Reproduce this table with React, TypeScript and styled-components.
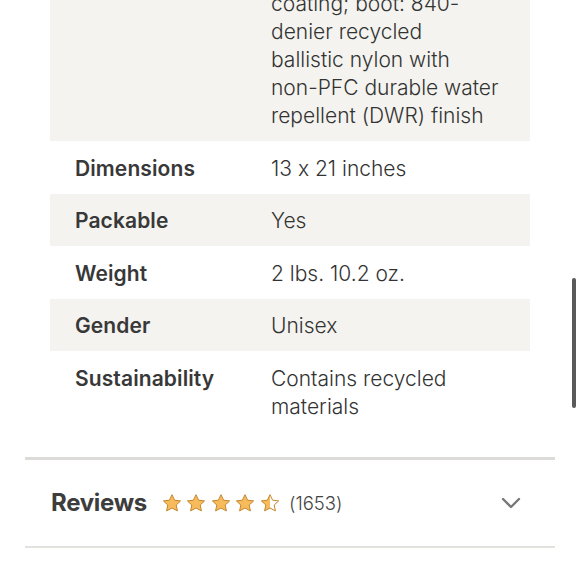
import React from "react";
import styled, { createGlobalStyle } from "styled-components";

const GlobalStyle = createGlobalStyle`
  html, body {
    margin: 0;
    padding: 0;
    background: #ffffff;
    overflow: hidden;
  }
  body {
    font-family: Inter, "Liberation Sans", sans-serif;
    font-feature-settings: "calt" 0;
    color: #333333;
    -webkit-font-smoothing: antialiased;
  }
`;

const Page = styled.div`
  width: 580px;
  height: 580px;
  overflow: hidden;
  position: relative;
`;

// the page is scrolled: the first spec row starts above the viewport
const Content = styled.div`
  margin-top: -107.5px;
  padding: 0 25px;
`;

const SpecTable = styled.div`
  margin: 0 25px;
  display: flex;
  flex-direction: column;
`;

const SpecRow = styled.div<{ $shaded?: boolean }>`
  display: grid;
  grid-template-columns: 196px 1fr;
  padding: 13.75px 16px 10.75px 25px;
  background: ${(p) => (p.$shaded ? "#f4f3ef" : "transparent")};
  font-size: 21px;
  line-height: 28px;
`;

const SpecLabel = styled.div`
  font-weight: 600;
  color: #383838;
  letter-spacing: 0.1px;
`;

const SpecValue = styled.div`
  font-weight: 300;
  color: #333333;
`;

const Section = styled.section`
  margin-top: 25px;
  border-top: 3px solid #dcdbd8;
  border-bottom: 2px solid #e2e1de;
`;

const ReviewsHeader = styled.div`
  display: flex;
  align-items: center;
  height: 86px;
  padding: 0 34px 0 26px;
`;

const ReviewsTitle = styled.h2`
  margin: 0;
  font-size: 24px;
  font-weight: 700;
  color: #3d3d3d;
  letter-spacing: -0.3px;
`;

const Stars = styled.div`
  display: flex;
  gap: 4.5px;
  margin-left: 15px;
`;

const Count = styled.span`
  margin-left: 9px;
  font-size: 18.5px;
  font-weight: 300;
  color: #444444;
`;

const Chevron = styled.svg`
  margin-left: auto;
`;

const ScrollIndicator = styled.div`
  position: absolute;
  right: 4px;
  top: 278px;
  width: 4px;
  height: 130px;
  border-radius: 2px;
  background: #5a5a5a;
`;

const STAR_PATH =
  "M10 1.2l2.6 5.5 6 .7-4.4 4.1 1.2 5.9L10 14.5l-5.4 2.9 1.2-5.9L1.4 7.4l6-.7z";

const Star: React.FC<{ fill: number; id: string }> = ({ fill, id }) => (
  <svg width="20" height="20" viewBox="0 0 20 19">
    <defs>
      <linearGradient id={id} x1="0" x2="1" y1="0" y2="0">
        <stop offset={fill} stopColor="#f7bb5c" />
        <stop offset={fill} stopColor="#ffffff" />
      </linearGradient>
    </defs>
    <path
      d={STAR_PATH}
      fill={`url(#${id})`}
      stroke="#c4862c"
      strokeWidth="1"
      strokeLinejoin="round"
    />
  </svg>
);

const specs = [
  {
    label: "Materials",
    value: [
      "Body: 900-denier",
      "recycled polyester",
      "ripstop with TPU",
      "coating; boot: 840-",
      "denier recycled",
      "ballistic nylon with",
      "non-PFC durable water",
      "repellent (DWR) finish",
    ],
  },
  { label: "Dimensions", value: ["13 x 21 inches"] },
  { label: "Packable", value: ["Yes"] },
  { label: "Weight", value: ["2 lbs. 10.2 oz."] },
  { label: "Gender", value: ["Unisex"] },
  { label: "Sustainability", value: ["Contains recycled", "materials"] },
];

const rating = [1, 1, 1, 1, 0.5];

const App: React.FC = () => {
  return (
    <Page>
      <GlobalStyle />
      <Content>
        <SpecTable>
          {specs.map((s, i) => (
            <SpecRow key={s.label} $shaded={i % 2 === 0}>
              <SpecLabel>{s.label}</SpecLabel>
              <SpecValue>
                {s.value.map((line, j) => (
                  <React.Fragment key={j}>
                    {line}
                    {j < s.value.length - 1 && <br />}
                  </React.Fragment>
                ))}
              </SpecValue>
            </SpecRow>
          ))}
        </SpecTable>

        <Section>
          <ReviewsHeader>
            <ReviewsTitle>Reviews</ReviewsTitle>
            <Stars>
              {rating.map((r, i) => (
                <Star key={i} fill={r} id={`star-${i}`} />
              ))}
            </Stars>
            <Count>(1653)</Count>
            <Chevron width="20" height="12" viewBox="0 0 20 12">
              <path
                d="M2 2l8 8 8-8"
                fill="none"
                stroke="#777777"
                strokeWidth="2.4"
                strokeLinecap="round"
                strokeLinejoin="round"
              />
            </Chevron>
          </ReviewsHeader>
        </Section>
      </Content>
      <ScrollIndicator />
    </Page>
  );
};

export default App;
